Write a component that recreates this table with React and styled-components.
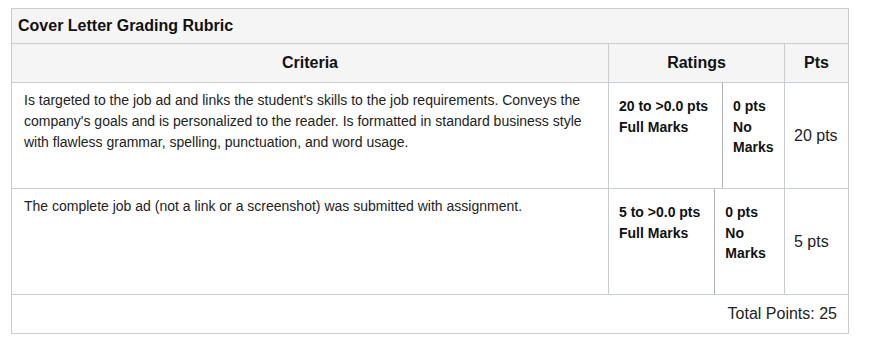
import React from "react";
import styled, { createGlobalStyle } from "styled-components";

const criteria = [
  {
    description:
      "Is targeted to the job ad and links the student's skills to the job requirements. Conveys the company's goals and is personalized to the reader. Is formatted in standard business style with flawless grammar, spelling, punctuation, and word usage.",
    ratings: [
      { range: "20 to >0.0 pts", label: "Full Marks" },
      { range: "0 pts", label: "No Marks" },
    ],
    points: 20,
  },
  {
    description:
      "The complete job ad (not a link or a screenshot) was submitted with assignment.",
    ratings: [
      { range: "5 to >0.0 pts", label: "Full Marks" },
      { range: "0 pts", label: "No Marks" },
    ],
    points: 5,
  },
];

function App() {
  const total = criteria.reduce((sum, c) => sum + c.points, 0);

  return (
    <Page>
      <GlobalStyle />
      <Rubric>
        <Caption>Cover Letter Grading Rubric</Caption>
        <HeaderRow>
          <HeadCell>Criteria</HeadCell>
          <HeadCell>Ratings</HeadCell>
          <HeadCell last>Pts</HeadCell>
        </HeaderRow>
        {criteria.map((c, i) => (
          <Row key={i}>
            <Description>{c.description}</Description>
            <Ratings>
              {c.ratings.map((r, j) => (
                <Tier key={j} first={j === 0}>
                  <div>{r.range}</div>
                  <div>{r.label}</div>
                </Tier>
              ))}
            </Ratings>
            <Points>{c.points} pts</Points>
          </Row>
        ))}
        <Footer>Total Points: {total}</Footer>
      </Rubric>
    </Page>
  );
}

const GlobalStyle = createGlobalStyle`
  body {
    margin: 0;
    background: #fff;
    font-family: "Liberation Sans", Arial, sans-serif;
    color: #222;
  }
`;

const Page = styled.div`
  padding: 8px 0 0 11px;
`;

const Rubric = styled.div`
  width: 838px;
  box-sizing: border-box;
  border: 1px solid #c7cdd1;
`;

const Caption = styled.div`
  height: 34px;
  display: flex;
  align-items: center;
  padding-left: 6px;
  background: #f5f5f5;
  border-bottom: 1px solid #c7cdd1;
  font-size: 16px;
  font-weight: bold;
  color: #111;
`;

const Grid = styled.div`
  display: grid;
  grid-template-columns: 597px 176px 63px;
  border-bottom: 1px solid #c7cdd1;
`;

const HeaderRow = styled(Grid)`
  height: 38px;
  background: #f5f5f5;
`;

const HeadCell = styled.div`
  display: flex;
  align-items: center;
  justify-content: center;
  border-right: ${(p) => (p.last ? "none" : "1px solid #c7cdd1")};
  font-size: 16px;
  font-weight: bold;
  color: #111;
`;

const Row = styled(Grid)`
  height: 105px;
`;

const Description = styled.div`
  padding: 7px 12px 0 12px;
  border-right: 1px solid #c7cdd1;
  font-size: 14px;
  line-height: 21px;
`;

const Ratings = styled.div`
  display: flex;
  border-right: 1px solid #c7cdd1;
`;

const Tier = styled.div`
  flex: ${(p) => (p.first ? "none" : "1")};
  min-width: 0;
  padding: 13px ${(p) => (p.first ? "14px" : "6px")} 0 10px;
  border-right: ${(p) => (p.first ? "1px solid #aab0b4" : "none")};
  font-size: 14px;
  line-height: 20.5px;
  font-weight: bold;
  color: #111;
`;

const Points = styled.div`
  display: flex;
  align-items: center;
  padding-left: 9px;
  font-size: 16px;
`;

const Footer = styled.div`
  height: 38px;
  display: flex;
  align-items: center;
  justify-content: flex-end;
  padding-right: 11px;
  font-size: 16px;
`;

export default App;
